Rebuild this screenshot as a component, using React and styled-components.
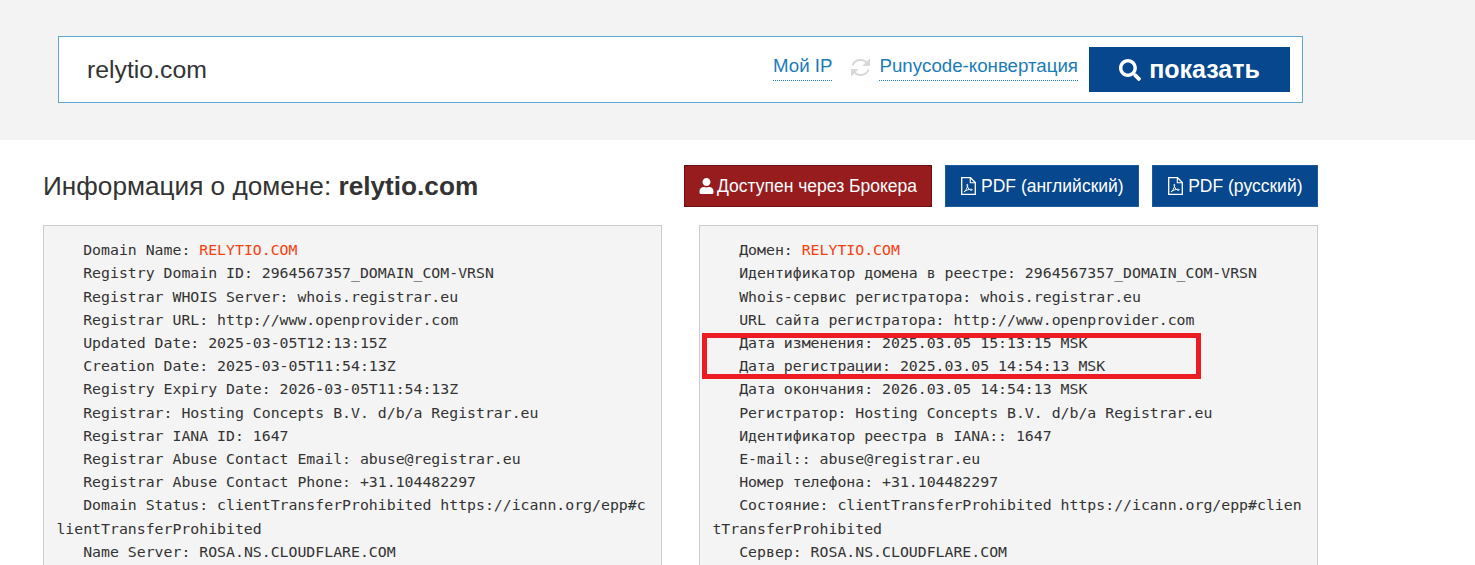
import React from 'react';
import styled, { createGlobalStyle } from 'styled-components';
import { FaSearch, FaUser } from 'react-icons/fa';

const left = [
  ['Domain Name: ', 'RELYTIO.COM'],
  ['Registry Domain ID: 2964567357_DOMAIN_COM-VRSN'],
  ['Registrar WHOIS Server: whois.registrar.eu'],
  ['Registrar URL: http://www.openprovider.com'],
  ['Updated Date: 2025-03-05T12:13:15Z'],
  ['Creation Date: 2025-03-05T11:54:13Z'],
  ['Registry Expiry Date: 2026-03-05T11:54:13Z'],
  ['Registrar: Hosting Concepts B.V. d/b/a Registrar.eu'],
  ['Registrar IANA ID: 1647'],
  ['Registrar Abuse Contact Email: abuse@registrar.eu'],
  ['Registrar Abuse Contact Phone: +31.104482297'],
  ['Domain Status: clientTransferProhibited https://icann.org/epp#clientTransferProhibited'],
  ['Name Server: ROSA.NS.CLOUDFLARE.COM'],
];

const right = [
  ['Домен: ', 'RELYTIO.COM'],
  ['Идентификатор домена в реестре: 2964567357_DOMAIN_COM-VRSN'],
  ['Whois-сервис регистратора: whois.registrar.eu'],
  ['URL сайта регистратора: http://www.openprovider.com'],
  ['Дата изменения: 2025.03.05 15:13:15 MSK'],
  ['Дата регистрации: 2025.03.05 14:54:13 MSK'],
  ['Дата окончания: 2026.03.05 14:54:13 MSK'],
  ['Регистратор: Hosting Concepts B.V. d/b/a Registrar.eu'],
  ['Идентификатор реестра в IANA:: 1647'],
  ['E-mail:: abuse@registrar.eu'],
  ['Номер телефона: +31.104482297'],
  ['Состояние: clientTransferProhibited https://icann.org/epp#clientTransferProhibited'],
  ['Сервер: ROSA.NS.CLOUDFLARE.COM'],
];

const PdfIcon = () => (
  <svg viewBox="0 0 15 18" fill="none" stroke="currentColor">
    <path d="M.7.7h8.8l4.8 4.8v11.8H.7z" strokeWidth="1.3" />
    <path d="M9.3 1v4.8h4.8" strokeWidth="1.1" />
    <path
      d="M3 15c1.5-.8 3-3.4 3.6-6.2.2-1 .1-1.6-.3-1.6-.5 0-.4 1.3.3 2.7.8 1.6 2 2.9 3 3.3 1 .3 2-.1 1.7-.6-.3-.6-3-.3-5 .4-1.600.6-3 1.400-3.300 2z"
      strokeWidth="1"
    />
  </svg>
);

const RefreshGlyph = (props) => (
  <svg viewBox="1.5 1.5 17 17" {...props}>
    <g fill="none" stroke="currentColor" strokeWidth="1.8">
      <path d="M16.200 6.800A7.500 7.500 0 0 0 2.800 8.200" />
      <path d="M3.800 13.200A7.500 7.500 0 0 0 17.200 11.800" />
    </g>
    <path d="M18.500 1.800v6.900h-6.900z" fill="currentColor" />
    <path d="M1.500 18.200v-6.900h6.900z" fill="currentColor" />
  </svg>
);

const WhoisBlock = ({ rows, children }) => (
  <Panel>
    {rows.map(([text, domain], i) => (
      <Row key={i}>
        {'   ' + text}
        {domain && <Domain>{domain}</Domain>}
      </Row>
    ))}
    {children}
  </Panel>
);

const App = () => (
  <Page>
    <GlobalStyle />
    <SearchBand>
      <SearchBox>
        <DomainValue>relytio.com</DomainValue>
        <SearchTools>
          <ToolLink>Мой IP</ToolLink>
          <RefreshIcon />
          <ToolLink>Punycode-конвертация</ToolLink>
          <SearchButton>
            <FaSearch />
            показать
          </SearchButton>
        </SearchTools>
      </SearchBox>
    </SearchBand>
    <Content>
      <Header>
        <Title>
          Информация о домене: <b>relytio.com</b>
        </Title>
        <Actions>
          <ActionButton $red>
            <FaUser />
            Доступен через Брокера
          </ActionButton>
          <ActionButton>
            <PdfIcon />
            PDF (английский)
          </ActionButton>
          <ActionButton>
            <PdfIcon />
            PDF (русский)
          </ActionButton>
        </Actions>
      </Header>
      <Columns>
        <WhoisBlock rows={left} />
        <WhoisBlock rows={right}>
          <Highlight />
        </WhoisBlock>
      </Columns>
    </Content>
  </Page>
);

export default App;

const GlobalStyle = createGlobalStyle`
  html, body {
    margin: 0;
    height: 565px;
    overflow: hidden;
    background: #fff;
  }
  * {
    box-sizing: border-box;
  }
`;

const Page = styled.div`
  width: 1475px;
  height: 565px;
  overflow: hidden;
  font-family: "Liberation Sans", Arial, sans-serif;
  color: #333;
`;

const SearchBand = styled.div`
  height: 140px;
  padding: 36px 172px 0 58px;
  background: #f3f3f3;
`;

const SearchBox = styled.div`
  display: flex;
  align-items: center;
  justify-content: space-between;
  height: 67px;
  padding: 0 12px 0 28px;
  background: #fff;
  border: 1px solid #5fa8d3;
`;

const DomainValue = styled.div`
  font-size: 24.8px;
  color: #333;
`;

const SearchTools = styled.div`
  display: flex;
  align-items: center;
`;

const ToolLink = styled.span`
  margin-top: -4px;
  font-size: 18.7px;
  line-height: 24px;
  padding-bottom: 2px;
  color: #1a7cb8;
  border-bottom: 1px dotted #1a7cb8;
`;

const RefreshIcon = styled(RefreshGlyph)`
  width: 19px;
  height: 19px;
  margin: -4px 9px 0 19px;
  color: #d8d8d8;
`;

const SearchButton = styled.div`
  display: flex;
  align-items: center;
  justify-content: center;
  gap: 8px;
  width: 201px;
  height: 45px;
  margin-left: 11px;
  font-size: 25px;
  font-weight: 700;
  color: #fff;
  background: #07478e;

  svg {
    width: 22px;
    height: 22px;
  }
`;

const Content = styled.div`
  width: 1275px;
  margin-left: 43px;
  padding-top: 25px;
`;

const Header = styled.div`
  display: flex;
  align-items: center;
  justify-content: space-between;
  height: 42px;
`;

const Title = styled.h1`
  margin: 0;
  font-size: 26.2px;
  font-weight: 400;
  color: #333;

  b {
    font-weight: 700;
  }
`;

const Actions = styled.div`
  display: flex;
  gap: 13px;
`;

const ActionButton = styled.div`
  display: flex;
  align-items: center;
  justify-content: center;
  gap: ${({ $red }) => ($red ? '3px' : '5px')};
  height: 42px;
  padding: ${({ $red }) => ($red ? '0 14px' : '0 14.5px 0 15px')};
  font-size: 17.5px;
  color: #fff;
  background: ${({ $red }) => ($red ? '#971c1e' : '#07478e')};
  border: 1px solid ${({ $red }) => ($red ? '#6e1012' : '#1a5c9e')};

  svg {
    width: 15px;
    height: ${({ $red }) => ($red ? '16px' : '18px')};
  }
`;

const Columns = styled.div`
  display: grid;
  grid-template-columns: 619px 619px;
  justify-content: space-between;
  margin-top: 18px;
`;

const Panel = styled.div`
  position: relative;
  height: 500px;
  padding: 12.15px 12px 0 12.4px;
  background: #f4f4f4;
  border: 1px solid #ccc;
  font-family: "DejaVu Sans Mono", monospace;
  font-size: 14.83px;
  line-height: 23.2px;
  color: #333;
`;

const Row = styled.div`
  white-space: pre-wrap;
  word-break: break-all;
`;

const Domain = styled.span`
  color: #f5400f;
`;

// красная рамка поверх текста
const Highlight = styled.div`
  position: absolute;
  left: 2px;
  top: 107px;
  width: 499px;
  height: 46px;
  border: 5px solid #ed1c24;
`;
